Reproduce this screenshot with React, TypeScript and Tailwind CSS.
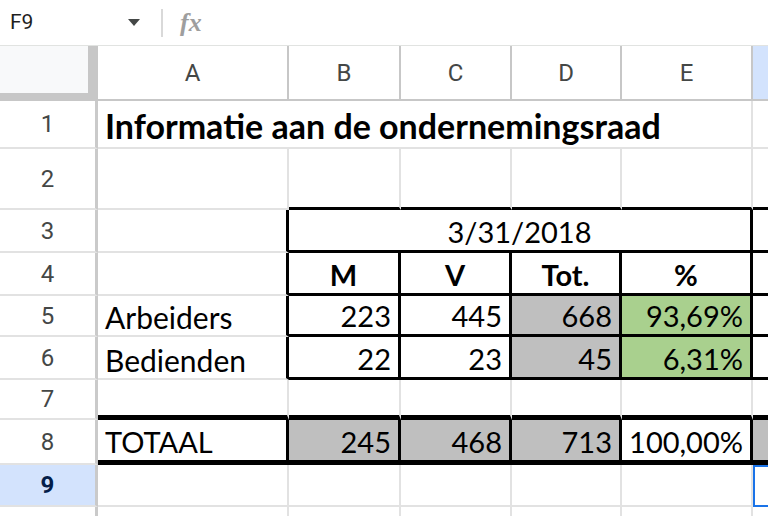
import { twMerge } from "tailwind-merge";

type CellProps = {
  className?: string;
  children?: React.ReactNode;
};

// data cell: owns its right and bottom edge, like a sheet gridline
function Cell({ className = "", children }: CellProps) {
  return (
    <div
      className={twMerge(
        "flex items-end overflow-hidden whitespace-nowrap border-r-2 border-b-2 border-[#e2e2e2] bg-white px-[7px] font-['Lato',sans-serif] text-[29px]/[1.2] text-black",
        className
      )}
    >
      {children}
    </div>
  );
}

function ColHead({ label, active = false }: { label?: string; active?: boolean }) {
  return (
    <div
      className={twMerge(
        "flex items-center justify-center border-r-2 border-b-2 border-[#c7c7c7] bg-white font-['Roboto',sans-serif] text-[24px] text-[#444746]",
        active && "border-r-0 bg-[#d3e3fd]"
      )}
    >
      {label}
    </div>
  );
}

function RowHead({ n, active = false }: { n?: number; active?: boolean }) {
  return (
    <div
      className={twMerge(
        "flex items-center justify-center border-r-[3px] border-b-2 border-r-[#cacaca] border-b-[#e2e2e2] bg-white font-['Roboto',sans-serif] text-[24px] text-[#444746]",
        active && "bg-[#d3e3fd] font-bold text-[#041e49]"
      )}
    >
      {n}
    </div>
  );
}

const R3 = "border-r-[3px] border-r-black";
const B3 = "border-b-[3px] border-b-black";
const B5 = "border-b-[5px] border-b-black";
const GRAY = "bg-[#bfbfbf]";
const GREEN = "bg-[#a9d08e]";

export default function App() {
  return (
    <div className="h-[516px] w-[768px] overflow-hidden bg-white">
      <div className="flex h-[46px] items-center border-b border-[#e1e3e1]">
        <div className="flex w-[150px] items-center justify-between pl-[10px] pr-[10px]">
          <span className="font-['Roboto',sans-serif] text-[21px] text-[#1f1f1f]">F9</span>
          <svg width="12" height="7" viewBox="0 0 12 7">
            <path d="M0 0h12L6 7z" fill="#444746" />
          </svg>
        </div>
        <div className="ml-[11px] h-[28px] w-[2px] bg-[#d9d9d9]" />
        <span className="ml-[17px] font-['Liberation_Serif',serif] text-[26px] font-semibold italic leading-none text-[#9e9e9e]">
          fx
        </span>
      </div>

      <div className="grid w-max grid-cols-[98px_191px_112px_111px_110px_131px_120px] grid-rows-[55px_48px_61px_43px_43px_41px_43px_40px_45px_42px_42px]">
        {/* column headers */}
        <div className="border-r-[10px] border-b-[8px] border-[#c7c7c7] bg-[#f8f9fa]" />
        <ColHead label="A" />
        <ColHead label="B" />
        <ColHead label="C" />
        <ColHead label="D" />
        <ColHead label="E" />
        <ColHead active />

        {/* 1 */}
        <RowHead n={1} />
        <Cell className="col-span-5 text-[34px]/[1.2] font-bold">Informatie aan de ondernemingsraad</Cell>
        <Cell />

        {/* 2 */}
        <RowHead n={2} />
        <Cell />
        <Cell className={B3} />
        <Cell className={B3} />
        <Cell className={B3} />
        <Cell className={B3} />
        <Cell className={B3} />

        {/* 3 */}
        <RowHead n={3} />
        <Cell className={R3} />
        <Cell className={twMerge("col-span-4 justify-center", R3, B3)}>3/31/2018</Cell>
        <Cell className={B3} />

        {/* 4 */}
        <RowHead n={4} />
        <Cell className={R3} />
        {["M", "V", "Tot.", "%"].map((h) => (
          <Cell key={h} className={twMerge("justify-center font-bold", R3, B3)}>
            {h}
          </Cell>
        ))}
        <Cell className={B3} />

        {/* 5 */}
        <RowHead n={5} />
        <Cell className={twMerge("text-[30px]/[1.2]", R3)}>Arbeiders</Cell>
        <Cell className={twMerge("justify-end", R3, B3)}>223</Cell>
        <Cell className={twMerge("justify-end", R3, B3)}>445</Cell>
        <Cell className={twMerge("justify-end", GRAY, R3, B3)}>668</Cell>
        <Cell className={twMerge("justify-end", GREEN, R3, B3)}>93,69%</Cell>
        <Cell className={B3} />

        {/* 6 */}
        <RowHead n={6} />
        <Cell className={twMerge("text-[30px]/[1.2]", R3)}>Bedienden</Cell>
        <Cell className={twMerge("justify-end", R3, B3)}>22</Cell>
        <Cell className={twMerge("justify-end", R3, B3)}>23</Cell>
        <Cell className={twMerge("justify-end", GRAY, R3, B3)}>45</Cell>
        <Cell className={twMerge("justify-end", GREEN, R3, B3)}>6,31%</Cell>
        <Cell className={B3} />

        {/* 7 */}
        <RowHead n={7} />
        <Cell className={B5} />
        <Cell className={B5} />
        <Cell className={B5} />
        <Cell className={B5} />
        <Cell className={B5} />
        <Cell className={B5} />

        {/* 8 */}
        <RowHead n={8} />
        <Cell className={twMerge(R3, B5)}>TOTAAL</Cell>
        <Cell className={twMerge("justify-end", GRAY, R3, B5)}>245</Cell>
        <Cell className={twMerge("justify-end", GRAY, R3, B5)}>468</Cell>
        <Cell className={twMerge("justify-end", GRAY, R3, B5)}>713</Cell>
        <Cell className={twMerge("justify-end", R3, B5)}>100,00%</Cell>
        <Cell className={twMerge(GRAY, B5)} />

        {/* 9 */}
        <RowHead n={9} active />
        <Cell />
        <Cell />
        <Cell />
        <Cell />
        <Cell />
        <Cell className="border-2 border-[#1a73e8]" />

        {/* 10, label falls below the window */}
        <RowHead />
        <Cell />
        <Cell />
        <Cell />
        <Cell />
        <Cell />
        <Cell />
      </div>
    </div>
  );
}
